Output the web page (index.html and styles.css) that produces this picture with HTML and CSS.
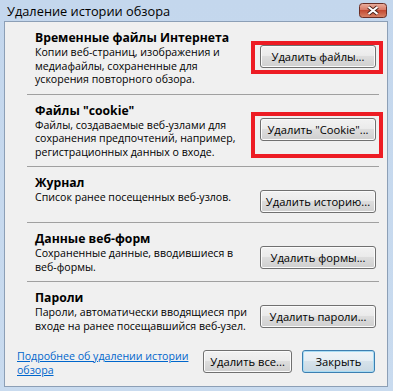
FILE: index.html
```html
<!DOCTYPE html>
<html lang="ru">
<head>
  <meta charset="UTF-8" />
  <title>Удаление истории обзора</title>
  <link rel="stylesheet" href="styles.css">
</head>
<body>

<div class="window">
  <div class="titlebar">
    <span class="title">Удаление истории обзора</span>
    <span class="close">
      <svg width="28" height="15" viewBox="0 0 28 15">
        <defs>
          <linearGradient id="closeFill" x1="0" y1="0" x2="0" y2="1">
            <stop offset="0" stop-color="#eab0a0"/>
            <stop offset="0.5" stop-color="#d67460"/>
            <stop offset="0.5" stop-color="#c44a32"/>
            <stop offset="1" stop-color="#d8866a"/>
          </linearGradient>
        </defs>
        <rect x="0.5" y="0.5" width="27" height="14" rx="3" fill="url(#closeFill)" stroke="#6a2e25"/>
        <path d="M9.5 4 L18.5 11 M18.5 4 L9.5 11" stroke="#4a2018" stroke-width="4"/>
        <path d="M9.5 4 L18.5 11 M18.5 4 L9.5 11" stroke="#ffffff" stroke-width="2.2"/>
      </svg>
    </span>
  </div>

  <div class="client">
    <div class="groups">
      <div class="group">
        <div class="info">
          <div class="head">Временные файлы Интернета</div>
          <div class="desc">Копии веб-страниц, изображения и<br>медиафайлы, сохраненные для<br>ускорения повторного обзора.</div>
        </div>
        <div class="action marked">
          <button class="btn">Удалить файлы...</button>
        </div>
      </div>

      <div class="group">
        <div class="info">
          <div class="head">Файлы "cookie"</div>
          <div class="desc">Файлы, создаваемые веб-узлами для<br>сохранения предпочтений, например,<br>регистрационных данных о входе.</div>
        </div>
        <div class="action marked tall">
          <button class="btn">Удалить "Cookie"...</button>
        </div>
      </div>

      <div class="group">
        <div class="info">
          <div class="head">Журнал</div>
          <div class="desc">Список ранее посещенных веб-узлов.</div>
        </div>
        <div class="action">
          <button class="btn">Удалить историю...</button>
        </div>
      </div>

      <div class="group">
        <div class="info">
          <div class="head">Данные веб-форм</div>
          <div class="desc">Сохраненные данные, вводившиеся в<br>веб-формы.</div>
        </div>
        <div class="action">
          <button class="btn">Удалить формы...</button>
        </div>
      </div>

      <div class="group">
        <div class="info">
          <div class="head">Пароли</div>
          <div class="desc">Пароли, автоматически вводящиеся при<br>входе на ранее посещавшийся веб-узел.</div>
        </div>
        <div class="action">
          <button class="btn">Удалить пароли...</button>
        </div>
      </div>
    </div>

    <div class="footer">
      <a class="more" href="#">Подробнее об удалении истории<br>обзора</a>
      <div class="footer-buttons">
        <button class="btn btn-all">Удалить все...</button>
        <button class="btn btn-close">Закрыть</button>
      </div>
    </div>
  </div>
</div>

</body>
</html>
```

FILE: styles.css
```css
* {
  box-sizing: border-box;
}
body {
  margin: 0;
  font-family: "Open Sans", "Noto Sans", sans-serif;
  font-size: 10.6px;
  color: #000;
}
.window {
  width: 393px;
  height: 391px;
  background: linear-gradient(#c4d7ed, #c9dbef);
  padding: 0 5px 4px 4px;
  display: flex;
  flex-direction: column;
}
.titlebar {
  height: 21px;
  display: flex;
  align-items: center;
  justify-content: space-between;
}
.title {
  font-size: 12.8px;
  padding-left: 3px;
}
.close {
  display: flex;
  margin-right: 1px;
}
.client {
  flex: 1;
  background-color: #f0f0f0;
  border: 1px solid #8c9fb6;
  display: flex;
  flex-direction: column;
}
.groups {
  padding: 0 8px 0 22px;
}
.group {
  display: flex;
  justify-content: space-between;
  align-items: flex-start;
  padding: 9px 3px 7px 8px;
  min-height: 56px;
  border-bottom: 1px solid #a0a0a0;
}
.group:last-child {
  border-bottom: none;
}
.head {
  font-weight: bold;
  font-size: 12.2px;
  line-height: 14px;
  margin-bottom: 1px;
}
.desc {
  line-height: 13.5px;
  white-space: nowrap;
}
.action {
  position: relative;
  margin-top: 14px;
}
.marked::after {
  content: "";
  position: absolute;
  left: -9px;
  right: -7px;
  top: -4px;
  bottom: -6px;
  border: 4px solid #ed1c24;
}
.marked.tall::after {
  top: -6px;
  bottom: -17px;
}
.btn {
  display: block;
  width: 116px;
  height: 23px;
  padding: 0;
  border: 1px solid #707070;
  border-radius: 3px;
  background: linear-gradient(#f2f2f2 0%, #ebebeb 45%, #dddddd 50%, #cfcfcf 100%);
  box-shadow: inset 0 0 0 1px #fbfbfb;
  font-family: inherit;
  font-size: 11.2px;
  color: #000;
}
.footer {
  margin-top: auto;
  display: flex;
  justify-content: space-between;
  align-items: flex-start;
  padding: 0 12px 9px 12px;
}
.more {
  color: #0066cc;
  line-height: 13.5px;
  white-space: nowrap;
}
.footer-buttons {
  display: flex;
  gap: 10px;
}
.btn-all {
  width: 89px;
}
.btn-close {
  width: 73px;
  border-color: #3c7fb1;
  box-shadow: inset 0 0 0 1px #a8dcf4;
  background: linear-gradient(#eef4f8 0%, #e6eef4 45%, #d6e2ea 50%, #c9d8e2 100%);
}
```
